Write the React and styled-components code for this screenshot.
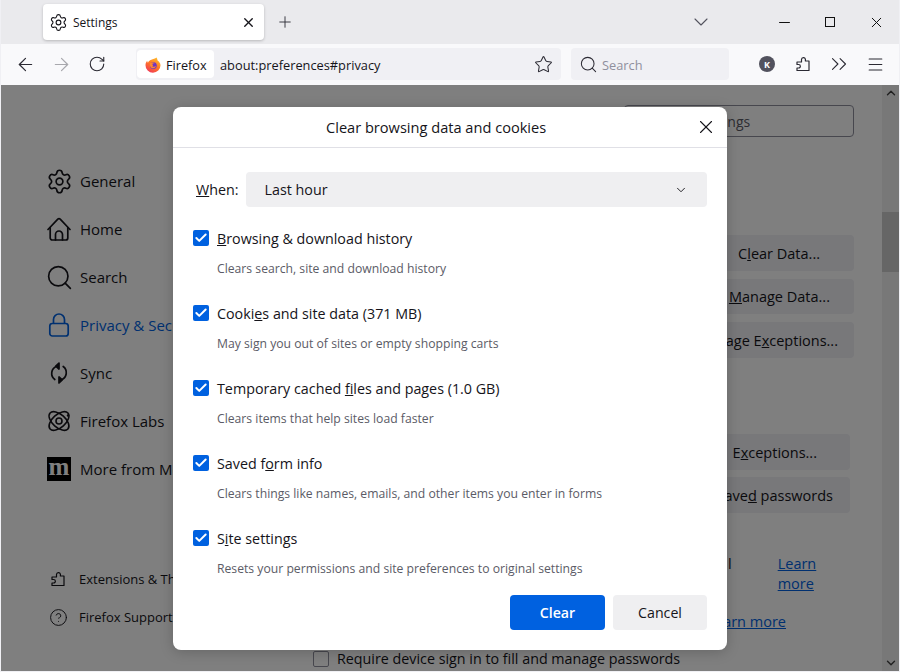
import React from "react";
import styled, { createGlobalStyle } from "styled-components";
import { Settings, Search, CircleHelp, ArrowLeft, ArrowRight, RotateCw, Star, Menu, ChevronsRight, X, Plus, ChevronDown, Minus, Check } from "lucide-react";

const GlobalStyle = createGlobalStyle`
  html, body {
    margin: 0;
    height: 100%;
    background: #f0f0f4;
  }
  body {
    font-family: "Open Sans", "Noto Sans", sans-serif;
    color: #15141a;
  }
`;

const Window = styled.div`
  width: 900px;
  height: 672px;
  box-sizing: border-box;
  display: flex;
  flex-direction: column;
  overflow: hidden;
  border-bottom: 1px solid #f0f0f4;
  border-left: 1px solid #f0f0f4;
  border-right: 1px solid #f0f0f4;
`;

const TabBar = styled.div`
  height: 44px;
  flex: none;
  margin: 0 -1px;
  display: flex;
  align-items: center;
  background: #eaeaed;
  padding-left: 43px;
  box-sizing: border-box;
`;

const Tab = styled.div`
  width: 221px;
  height: 36px;
  box-sizing: border-box;
  padding: 0 8px 0 6px;
  display: flex;
  align-items: center;
  gap: 5px;
  background: #fff;
  border-radius: 4px;
  box-shadow: 0 1px 3px rgba(0, 0, 0, 0.22);
  font-size: 12px;
  span {
    flex: 1;
  }
`;

const IconSlot = styled.div`
  width: ${props => props.$width || 36}px;
  height: ${props => props.$height || 36}px;
  margin-left: ${props => props.$left || 0}px;
  flex: none;
  display: flex;
  align-items: center;
  justify-content: center;
  color: ${props => props.$color || "#2b2a33"};
`;

const MaximizeBox = styled.div`
  width: 10px;
  height: 10px;
  box-sizing: border-box;
  border: 1px solid #111;
`;

const Spacer = styled.div`
  flex: 1;
`;

const NavBar = styled.div`
  height: 41px;
  flex: none;
  margin: 0 -1px;
  box-sizing: border-box;
  padding: 4px 0 5px 7px;
  display: flex;
  align-items: center;
  background: #f9f9fb;
`;

const UrlBar = styled.div`
  width: 425px;
  height: 32px;
  margin-left: 21px;
  box-sizing: border-box;
  padding: 2px 0 2px 1px;
  display: flex;
  align-items: center;
  background: #f0f0f4;
  border-radius: 4px;
  font-size: 12.8px;
`;

const IdentityPill = styled.div`
  width: 77px;
  height: 28px;
  box-sizing: border-box;
  padding: 1px 0 0 8px;
  display: flex;
  align-items: center;
  gap: 5px;
  background: #fff;
  border-radius: 4px;
  font-size: 12.7px;
`;

const UrlText = styled.div`
  flex: 1;
  margin-left: 6px;
  padding-top: 2px;
`;

const SearchBar = styled.div`
  width: 158px;
  height: 32px;
  margin-left: 10px;
  box-sizing: border-box;
  padding-left: 8px;
  display: flex;
  align-items: center;
  gap: 4px;
  background: #f0f0f4;
  border-radius: 4px;
  font-size: 12.8px;
  color: #8f8f9d;
  span {
    padding-top: 2px;
  }
`;

const Avatar = styled.div`
  width: 16px;
  height: 16px;
  border-radius: 50%;
  background: #52525e;
  color: #fff;
  font-size: 9px;
  font-weight: 700;
  display: flex;
  align-items: center;
  justify-content: center;
`;

const Content = styled.div`
  position: relative;
  flex: 1;
  min-height: 0;
  display: flex;
  background: #fff;
`;

const Sidebar = styled.nav`
  width: 312px;
  flex: none;
  box-sizing: border-box;
  padding: 72px 0 0 46px;
  display: flex;
  flex-direction: column;
`;

const SideItem = styled.div`
  height: 48px;
  display: flex;
  align-items: center;
  gap: 9px;
  font-size: 15px;
  white-space: nowrap;
  color: ${props => (props.$active ? "#0061e0" : "#15141a")};
`;

const SideIcon = styled.div`
  width: 24px;
  height: 24px;
  flex: none;
  display: flex;
  align-items: center;
  justify-content: center;
  svg {
    flex: none;
  }
`;

const SideFoot = styled.div`
  height: 38px;
  display: flex;
  align-items: center;
  gap: 13px;
  font-size: 13px;
  white-space: nowrap;
`;

const FootIcon = styled.div`
  width: 16px;
  height: 16px;
  flex: none;
  display: flex;
  align-items: center;
  justify-content: center;
  svg {
    flex: none;
  }
`;

const FootGroup = styled.div`
  margin-top: 67px;
  padding-left: 3px;
`;

const MozLogo = styled.div`
  width: 24px;
  height: 24px;
  background: #000;
  color: #fff;
  font-family: "Liberation Serif", serif;
  font-weight: 700;
  font-size: 25px;
  line-height: 19px;
  text-align: center;
`;

const Main = styled.main`
  flex: 1;
  display: flex;
  flex-direction: column;
  align-items: flex-end;
  font-size: 14.5px;
  padding: 20px 28px 0 0;
`;

const FindBox = styled.div`
  width: 230px;
  height: 32px;
  box-sizing: border-box;
  border: 1px solid #8f8f9d;
  border-radius: 4px;
  padding-left: 26px;
  display: flex;
  align-items: center;
  color: #5b5b66;
  font-size: 14px;
  white-space: nowrap;
`;

const GhostButton = styled.div`
  height: ${props => props.$height || 36}px;
  margin-top: ${props => props.$top || 8}px;
  margin-right: ${props => props.$right || 0}px;
  padding: 0 ${props => props.$pad || 16}px;
  display: flex;
  align-items: center;
  background: #f0f0f4;
  border-radius: 4px;
  white-space: pre;
`;

const LinkRow = styled.div`
  align-self: stretch;
  margin-top: 41px;
  padding-left: 415px;
  display: flex;
  gap: 46px;
  line-height: 20px;
`;

const Link = styled.a`
  color: #0061e0;
  text-decoration: underline;
`;

const LoneLink = styled(Link)`
  margin-top: 18px;
  margin-right: 68px;
  line-height: 20px;
`;

const DeviceRow = styled.label`
  align-self: flex-start;
  margin-top: 17px;
  display: flex;
  align-items: center;
  gap: 8px;
  line-height: 20px;
  white-space: nowrap;
  font-size: 14.3px;
  span {
    width: 16px;
    height: 16px;
    box-sizing: border-box;
    border: 1px solid #8f8f9d;
    border-radius: 2px;
  }
`;

const Scrollbar = styled.div`
  width: 17px;
  flex: none;
  display: flex;
  flex-direction: column;
  align-items: center;
  background: #f0f0f0;
  color: #404040;
`;

const ScrollArrow = styled.div`
  height: 17px;
  display: flex;
  align-items: center;
  transform: ${props => (props.$up ? "rotate(180deg)" : "none")};
`;

const ScrollThumb = styled.div`
  width: 100%;
  height: 60px;
  margin-top: 110px;
  background: #cdcdcd;
`;

const Dimmer = styled.div`
  position: absolute;
  inset: 0;
  display: flex;
  justify-content: center;
  align-items: flex-start;
  padding-top: 22px;
  background: rgba(0, 0, 0, 0.5);
`;

const Dialog = styled.section`
  width: 554px;
  height: 543px;
  display: flex;
  flex-direction: column;
  background: #fff;
  border-radius: 8px;
  box-shadow: 0 2px 14px rgba(0, 0, 0, 0.2);
`;

const DialogHeader = styled.header`
  height: 41px;
  flex: none;
  box-sizing: border-box;
  padding: 0 10px 0 153px;
  display: flex;
  align-items: center;
  justify-content: space-between;
  border-bottom: 1px solid #e0e0e6;
  font-size: 14.6px;
  font-weight: 500;
`;

const DialogBody = styled.div`
  flex: 1;
  padding: 24px 20px 20px;
  display: flex;
  flex-direction: column;
  font-size: 14.3px;
`;

const WhenRow = styled.div`
  display: flex;
  align-items: center;
  gap: 7px;
  padding-left: 3px;
`;

const Select = styled.div`
  flex: 1;
  height: 35px;
  box-sizing: border-box;
  padding: 0 19px;
  display: flex;
  align-items: center;
  justify-content: space-between;
  background: #efeff1;
  border-radius: 4px;
  font-weight: 500;
`;

const OptionList = styled.div`
  margin-top: 15px;
  display: flex;
  flex-direction: column;
`;

const OptionItem = styled.div`
  height: 75px;
  display: grid;
  grid-template-columns: 16px 1fr;
  grid-template-rows: 32px 28px;
  align-content: start;
  column-gap: 8px;
  align-items: center;
  &:last-child {
    height: 60px;
  }
`;

const CheckBox = styled.span`
  width: 16px;
  height: 16px;
  border-radius: 2px;
  background: #0061e0;
  color: #fff;
  display: flex;
  align-items: center;
  justify-content: center;
`;

const OptionHint = styled.div`
  grid-column: 2;
  font-size: 12.2px;
  color: #5b5b66;
`;

const DialogFooter = styled.footer`
  margin-top: auto;
  display: flex;
  justify-content: flex-end;
  gap: 8px;
`;

const DialogButton = styled.button`
  width: ${props => (props.$primary ? 95 : 94)}px;
  height: 35px;
  border: none;
  border-radius: 4px;
  font-family: inherit;
  font-size: 14.2px;
  font-weight: ${props => (props.$primary ? 600 : 500)};
  color: ${props => (props.$primary ? "#fff" : "#15141a")};
  background: ${props => (props.$primary ? "#0061e0" : "#efeff1")};
`;

const FirefoxLogo = () => (
  <svg width="16" height="16" viewBox="0 0 16 16">
    <defs>
      <linearGradient id="ffBody" x1="0.8" y1="0" x2="0.2" y2="1">
        <stop offset="0" stopColor="#ffc02e" />
        <stop offset="0.45" stopColor="#ff7a22" />
        <stop offset="1" stopColor="#f0365c" />
      </linearGradient>
    </defs>
    <path d="M11.4 0.6c.9 1.2 1 2 1 2.6 1.6 1.3 3.1 3 3.1 5.1A7.5 7.5 0 0 1 .5 8.2c0-2 .7-3.4 1.7-4.5 0 1 .3 1.7.8 2 .4-1.3 1.6-2.4 3.3-3 1.8-.6 3.9-.7 5.100-2.100z" fill="url(#ffBody)" />
    <circle cx="8.400" cy="8.600" r="3.400" fill="#6f35c4" />
    <path d="M5 6.300c1.700-1 3.700-1 5.100.1-1.400-.2-2.400.1-3 .8 1.300.3 1.300 1.600.1 2 1.200.9 2.900.700 4-.5-.5 1.700-2 2.700-3.800 2.600C5.800 11.100 4.500 9 5 6.300z" fill="#ff8a2b" />
  </svg>
);

const HomeIcon = () => (
  <svg width="24" height="24" viewBox="0 0 24 24" fill="none" stroke="currentColor" strokeWidth="1.700" strokeLinecap="round" strokeLinejoin="round">
    <path d="M1 12.500 10.800 2.200a1.700 1.700 0 0 1 2.400 0L23 12.500" />
    <path d="M3.200 10.500V21a2 2 0 0 0 2 2h13.600a2 2 0 0 0 2-2V10.500" />
    <path d="M8.500 23v-5.500a3.500 3.500 0 0 1 7 0V23" />
  </svg>
);

const LockIcon = () => (
  <svg width="24" height="24" viewBox="0 0 24 24" fill="none" stroke="currentColor" strokeWidth="1.700" strokeLinejoin="round">
    <rect x="2.800" y="10.500" width="18.400" height="12.500" rx="2.500" />
    <path d="M6.500 10.500V6.500a5.500 5.500 0 0 1 11 0v4" />
  </svg>
);

const SyncIcon = () => (
  <svg width="24" height="24" viewBox="0 0 24 24" fill="none" stroke="currentColor" strokeWidth="1.700" strokeLinecap="round" strokeLinejoin="round">
    <path d="M9.500 5.200A7.700 7.700 0 0 0 7.800 18.500" />
    <path d="M14.500 18.800A7.700 7.700 0 0 0 16.200 5.500" />
    <path d="M12 2l-3.200 3.200L12 8z" fill="currentColor" />
    <path d="M12 22l3.200-3.200L12 16z" fill="currentColor" />
  </svg>
);

const LabsIcon = () => (
  <svg width="24" height="24" viewBox="0 0 24 24" fill="none" stroke="currentColor" strokeWidth="1.600">
    <ellipse cx="12" cy="12" rx="12" ry="6.500" transform="rotate(42 12 12)" />
    <ellipse cx="12" cy="12" rx="12" ry="6.500" transform="rotate(-42 12 12)" />
    <circle cx="12" cy="12" r="3" />
    <circle cx="21" cy="6.500" r="1.200" fill="currentColor" stroke="none" />
  </svg>
);

const PuzzleIcon = ({ size = 16 }) => (
  <svg width={size} height={size} viewBox="0 0 16 16" fill="none" stroke="currentColor" strokeWidth="1.200" strokeLinejoin="round">
    <path d="M2 8.500V6h4.500V3.500a2 2 0 0 1 3.900-.4V5H14v9.500H2V12h1.600a1.750 1.750 0 0 0 0-3.500z" />
  </svg>
);

const options = [
  { label: <><u>B</u>rowsing &amp; download history</>, hint: "Clears search, site and download history" },
  { label: <>Cooki<u>e</u>s and site data (371 MB)</>, hint: "May sign you out of sites or empty shopping carts" },
  { label: <>Temporary cached <u>f</u>iles and pages (1.0 GB)</>, hint: "Clears items that help sites load faster" },
  { label: <>Saved f<u>o</u>rm info</>, hint: "Clears things like names, emails, and other items you enter in forms" },
  { label: <>S<u>i</u>te settings</>, hint: "Resets your permissions and site preferences to original settings" },
];

const App = () => (
  <Window>
    <GlobalStyle />
    <TabBar>
      <Tab>
        <Settings size={19} strokeWidth={1.4} />
        <span>Settings</span>
        <X size={15} strokeWidth={2.2} />
      </Tab>
      <IconSlot $left={3}><Plus size={18} strokeWidth={1.2} /></IconSlot>
      <Spacer />
      <IconSlot $color="#52525e"><ChevronDown size={24} strokeWidth={1.1} /></IconSlot>
      <IconSlot $left={47} $color="#111"><Minus size={17} strokeWidth={1} absoluteStrokeWidth /></IconSlot>
      <IconSlot $left={10} $color="#111"><MaximizeBox /></IconSlot>
      <IconSlot $left={10} $color="#111"><X size={17} strokeWidth={1} absoluteStrokeWidth /></IconSlot>
      <IconSlot $width={6} />
    </TabBar>
    <NavBar>
      <IconSlot><ArrowLeft size={21} strokeWidth={1.4} /></IconSlot>
      <IconSlot $color="#a8a8ad"><ArrowRight size={21} strokeWidth={1.4} /></IconSlot>
      <IconSlot><RotateCw size={18} strokeWidth={1.5} /></IconSlot>
      <UrlBar>
        <IdentityPill><FirefoxLogo />Firefox</IdentityPill>
        <UrlText>about:preferences#privacy</UrlText>
        <IconSlot><Star size={19} strokeWidth={1.3} /></IconSlot>
      </UrlBar>
      <SearchBar><Search size={19} strokeWidth={1.3} color="#2b2a33" /><span>Search</span></SearchBar>
      <IconSlot $left={20}><Avatar>K</Avatar></IconSlot>
      <IconSlot><PuzzleIcon /></IconSlot>
      <IconSlot><ChevronsRight size={26} strokeWidth={1} /></IconSlot>
      <IconSlot><Menu size={19} strokeWidth={1.3} /></IconSlot>
      <IconSlot $width={7} />
    </NavBar>
    <Content>
      <Sidebar>
        <SideItem><SideIcon><Settings size={27} strokeWidth={1.5} /></SideIcon>General</SideItem>
        <SideItem><SideIcon><HomeIcon /></SideIcon>Home</SideItem>
        <SideItem><SideIcon><Search size={29} strokeWidth={1.4} /></SideIcon>Search</SideItem>
        <SideItem $active><SideIcon><LockIcon /></SideIcon>Privacy &amp; Security</SideItem>
        <SideItem><SideIcon><SyncIcon /></SideIcon>Sync</SideItem>
        <SideItem><SideIcon><LabsIcon /></SideIcon>Firefox Labs</SideItem>
        <SideItem><MozLogo>m</MozLogo>More from Mozilla</SideItem>
        <FootGroup>
          <SideFoot><FootIcon><PuzzleIcon /></FootIcon>Extensions &amp; Themes</SideFoot>
          <SideFoot><FootIcon><CircleHelp size={19} strokeWidth={1.2} /></FootIcon>Firefox Support</SideFoot>
        </FootGroup>
      </Sidebar>
      <Main>
        <FindBox>Find in Settings</FindBox>
        <GhostButton $top={98} $pad={34}>C<u>l</u>ear Data...</GhostButton>
        <GhostButton $pad={24} $height={35}><u>M</u>anage Data...</GhostButton>
        <GhostButton>Manage E<u>x</u>ceptions...</GhostButton>
        <GhostButton $top={76} $right={4} $pad={33}>E<u>x</u>ceptions...</GhostButton>
        <GhostButton $top={7} $right={4} $pad={17}>Show save<u>d</u> passwords</GhostButton>
        <LinkRow>
          <span>l</span>
          <Link href="#learn">Learn<br />more</Link>
        </LinkRow>
        <LoneLink href="#learn-more">Learn more</LoneLink>
        <DeviceRow><span />Require device sign in to fill and manage passwords</DeviceRow>
      </Main>
      <Scrollbar>
        <ScrollArrow $up><ChevronDown size={14} strokeWidth={2.4} /></ScrollArrow>
        <ScrollThumb />
        <Spacer />
        <ScrollArrow><ChevronDown size={14} strokeWidth={2.4} /></ScrollArrow>
      </Scrollbar>
      <Dimmer>
        <Dialog>
          <DialogHeader>
            Clear browsing data and cookies
            <X size={22} strokeWidth={1.2} />
          </DialogHeader>
          <DialogBody>
            <WhenRow>
              <span><u>W</u>hen:</span>
              <Select>Last hour<ChevronDown size={14} strokeWidth={1.6} /></Select>
            </WhenRow>
            <OptionList>
              {options.map(option => (
                <OptionItem key={option.hint}>
                  <CheckBox><Check size={14} strokeWidth={3.4} /></CheckBox>
                  <span>{option.label}</span>
                  <OptionHint>{option.hint}</OptionHint>
                </OptionItem>
              ))}
            </OptionList>
            <DialogFooter>
              <DialogButton $primary>Clear</DialogButton>
              <DialogButton>Cancel</DialogButton>
            </DialogFooter>
          </DialogBody>
        </Dialog>
      </Dimmer>
    </Content>
  </Window>
);

export default App;
